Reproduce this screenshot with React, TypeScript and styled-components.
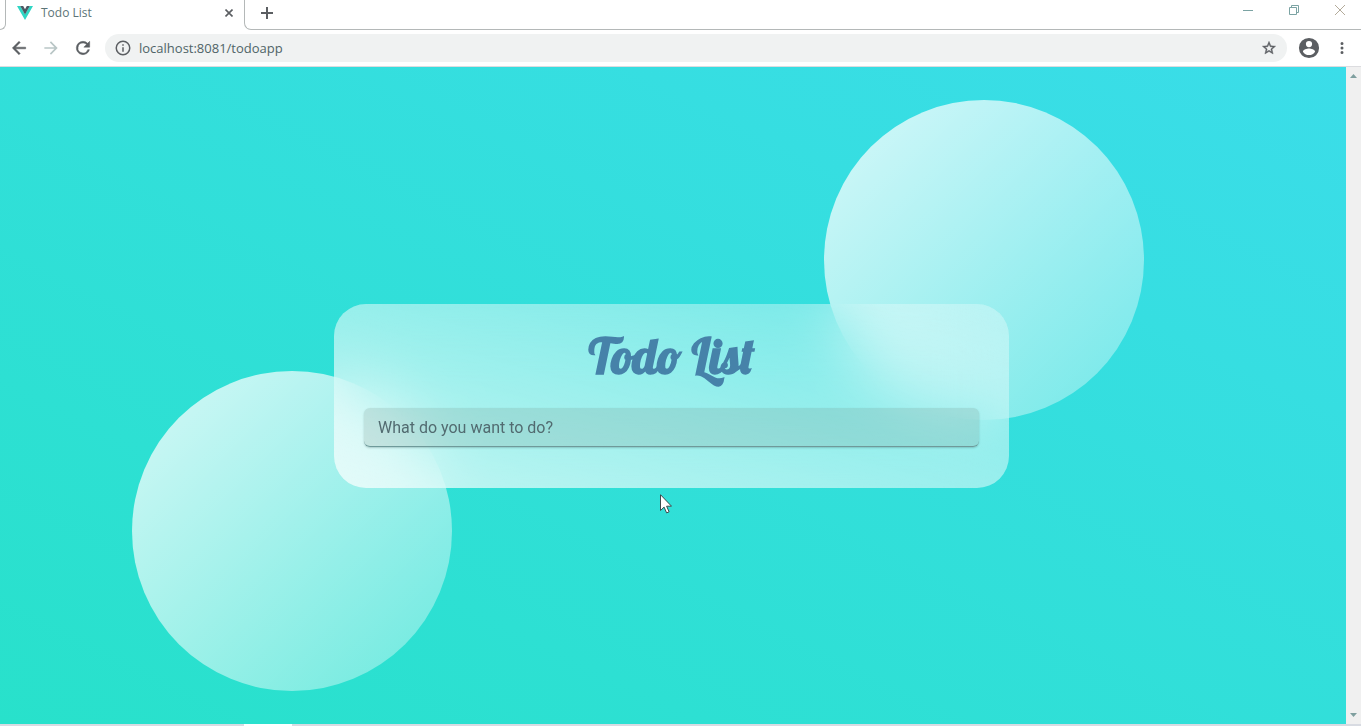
import React from "react";
import styled, { createGlobalStyle } from "styled-components";

const GlobalStyle = createGlobalStyle`
  *, *::before, *::after { box-sizing: border-box; }
  html, body, #root { height: 100%; }
  body { margin: 0; overflow: hidden; font-family: "Open Sans", sans-serif; }
  button { border: 0; padding: 0; background: none; font: inherit; color: inherit; }
`;

const Window = styled.div`
  display: flex;
  flex-direction: column;
  min-height: 100%;
  background: #fff;
`;

const TabStrip = styled.header`
  display: flex;
  height: 30px;
  flex: none;
`;

const StripEdge = styled.div`
  width: 6px;
  border: solid #b4b8b8;
  border-width: 0 1px 1px 0;
  border-bottom-right-radius: 7px;
`;

const Tab = styled.div`
  display: flex;
  align-items: center;
  width: 238px;
  padding: 0 9px 4px 11px;
  gap: 8px;
  font-size: 12px;
  color: #5c7477;
`;

const TabTitle = styled.span`
  flex: 1;
  line-height: 16px;
`;

const StripRest = styled.div`
  display: flex;
  flex: 1;
  justify-content: space-between;
  padding: 0 14px;
  border: solid #b4b8b8;
  border-width: 0 0 1px 1px;
  border-bottom-left-radius: 7px;
`;

const IconButton = styled.button<{ $w: number; $h: number; $color?: string }>`
  display: flex;
  flex: none;
  align-items: center;
  justify-content: center;
  width: ${(p) => p.$w}px;
  height: ${(p) => p.$h}px;
  color: ${(p) => p.$color ?? "#5b5e62"};
`;

const WindowControls = styled.div`
  display: flex;
  gap: 32px;
  height: 20px;
  align-items: center;
`;

const Toolbar = styled.nav`
  display: flex;
  flex: none;
  align-items: center;
  height: 37px;
  padding: 0 9px;
  border-bottom: 1px solid #dcdcdf;
`;

const NavButtons = styled.div`
  display: flex;
  gap: 12px;
  margin-right: 12px;
`;

const AddressBar = styled.div`
  display: flex;
  flex: 1;
  align-items: center;
  height: 28px;
  padding: 0 8px;
  border-radius: 14px;
  background: #f0f2f2;
`;

const Address = styled.input`
  flex: 1;
  min-width: 0;
  height: 20px;
  margin-left: 6px;
  padding: 0;
  border: 0;
  outline: 0;
  background: none;
  font-family: "Open Sans", sans-serif;
  font-size: 13px;
  color: #4f6467;
`;

const ToolbarEnd = styled.div`
  display: flex;
  gap: 12px;
  margin-left: 11px;
`;

const Viewport = styled.div`
  display: flex;
  flex: 1;
`;

const Page = styled.main`
  position: relative;
  display: flex;
  flex: 1;
  align-items: center;
  justify-content: center;
  padding-right: 3px;
  background: linear-gradient(to right top, #28e1cb, #3bdde9);
`;

const Circle = styled.div<{ $place: "top" | "bottom" }>`
  position: absolute;
  ${(p) => (p.$place === "top" ? "top: 5%; right: 15%;" : "bottom: 5%; left: 132px;")}
  width: 320px;
  height: 320px;
  border-radius: 50%;
  background: linear-gradient(to right bottom, rgba(255, 255, 255, 0.8), rgba(255, 255, 255, 0.3));
`;

const Card = styled.section`
  position: relative;
  width: 100%;
  max-width: 675px;
  padding: 20px 30px 41px;
  border-radius: 32px;
  background: linear-gradient(to right top, rgba(255, 255, 255, 0.7), rgba(255, 255, 255, 0.3));
  backdrop-filter: blur(32px);
`;

const Title = styled.h1`
  margin: 0 0 20px;
  text-align: center;
  font-family: Lobster, "Liberation Serif", cursive;
  font-size: 48px;
  font-weight: 700;
  line-height: 64px;
  color: #4682a9;
`;

const TaskInput = styled.input`
  display: block;
  width: 100%;
  height: 39px;
  padding: 2px 14px 0;
  border: 0;
  border-bottom: 1px solid #6f9a9a;
  border-radius: 6px;
  outline: 0;
  background: rgba(110, 140, 130, 0.2);
  box-shadow: 0 1px 2px rgba(50, 90, 90, 0.3);
  font-family: Roboto, sans-serif;
  font-size: 16px;
  color: #526b70;
  &::placeholder { color: #526b70; opacity: 1; }
`;

const ScrollRail = styled.div`
  display: flex;
  flex-direction: column;
  justify-content: space-between;
  width: 15px;
  padding: 1px 0;
  background: #f0f0f0;
`;

const Taskbar = styled.footer`
  flex: none;
  height: 2px;
  padding-left: 244px;
  background: #d8dbe2;
`;

const ActiveTask = styled.div`
  width: 48px;
  height: 2px;
  background: #fff;
`;

const Pointer = styled.svg`
  position: absolute;
  top: 65%;
  left: 49%;
`;

const paths = {
  back: "M20 11H7.83l5.59-5.59L12 4l-8 8 8 8 1.41-1.41L7.83 13H20v-2z",
  forward: "M12 4l-1.41 1.41L16.17 11H4v2h12.17l-5.58 5.59L12 20l8-8z",
  reload: "M17.65 6.35A7.95 7.95 0 0 0 12 4a8 8 0 1 0 7.73 10h-2.08A6 6 0 1 1 12 6c1.66 0 3.14.69 4.22 1.78L13 11h7V4l-2.35 2.35z",
  info: "M11 7h2v2h-2zm0 4h2v6h-2zm1-9a10 10 0 1 0 0 20 10 10 0 0 0 0-20zm0 18a8 8 0 1 1 0-16 8 8 0 0 1 0 16z",
  star: "M22 9.24l-7.19-.62L12 2 9.19 8.63 2 9.24l5.46 4.73L5.82 21 12 17.27 18.18 21l-1.63-7.03L22 9.24zM12 15.4l-3.76 2.27 1-4.28-3.32-2.88 4.38-.38L12 6.1l1.71 4.04 4.38.38-3.32 2.88 1 4.28L12 15.4z",
  person: "M12 1a11 11 0 1 0 0 22 11 11 0 0 0 0-22zm0 3.3a3.4 3.4 0 1 1 0 6.8 3.4 3.4 0 0 1 0-6.8zm0 15.4a7.6 7.6 0 0 1-6.600-3.700c0-2.200 4.400-3.400 6.600-3.400s6.600 1.200 6.600 3.400a7.600 7.600 0 0 1-6.600 3.700z",
  more: "M12 8a2 2 0 1 0 0-4 2 2 0 0 0 0 4zm0 2a2 2 0 1 0 0 4 2 2 0 0 0 0-4zm0 6a2 2 0 1 0 0 4 2 2 0 0 0 0-4z",
};

function Icon({ name, size = 20 }: { name: keyof typeof paths; size?: number }) {
  const bold = name === "star" || name === "back" || name === "reload";
  return (
    <svg
      width={size}
      height={size}
      viewBox="0 0 24 24"
      fill="currentColor"
      stroke={bold ? "currentColor" : "none"}
      strokeWidth="0.6"
      aria-hidden="true"
    >
      <path d={paths[name]} />
    </svg>
  );
}

export default function App() {
  return (
    <Window>
      <GlobalStyle />
      <TabStrip>
        <StripEdge />
        <Tab>
          <svg width="16" height="14" viewBox="0 0 16 14" aria-hidden="true">
            <path d="M0 0h3.200L8 8.300 12.800 0H16L8 14z" fill="#2fd6c4" />
            <path d="M3.200 0h3L8 3.200 9.800 0h3L8 8.500z" fill="#4b5964" />
          </svg>
          <TabTitle>Todo List</TabTitle>
          <IconButton $w={12} $h={16} aria-label="Close tab">
            <svg width="8" height="8" viewBox="0 0 8 8" stroke="currentColor" strokeWidth="1.6">
              <path d="M.5.5l7 7M7.500.5l-7 7" />
            </svg>
          </IconButton>
        </Tab>
        <StripRest>
          <IconButton $w={16} $h={26} aria-label="New tab">
            <svg width="12" height="12" viewBox="0 0 12 12" stroke="currentColor" strokeWidth="2">
              <path d="M6 0v12M0 6h12" />
            </svg>
          </IconButton>
          <WindowControls>
            <IconButton $w={14} $h={20} $color="#7ba3a3" aria-label="Minimize">
              <svg width="10" height="10" viewBox="0 0 10 10" stroke="currentColor"><path d="M0 5.500h10" /></svg>
            </IconButton>
            <IconButton $w={14} $h={20} $color="#7ba3a3" aria-label="Restore">
              <svg width="10" height="10" viewBox="0 0 10 10" stroke="currentColor" fill="none">
                <path d="M.5 2.500h7v7h-7zM2.500 2.500v-2h7v7h-2" />
              </svg>
            </IconButton>
            <IconButton $w={14} $h={20} $color="#b3ab9a" aria-label="Close">
              <svg width="10" height="10" viewBox="0 0 10 10" stroke="currentColor"><path d="M0 0l10 10M10 0L0 10" /></svg>
            </IconButton>
          </WindowControls>
        </StripRest>
      </TabStrip>
      <Toolbar>
        <NavButtons>
          <IconButton $w={20} $h={20} aria-label="Back"><Icon name="back" /></IconButton>
          <IconButton $w={20} $h={20} $color="#b9c6c6" aria-label="Forward"><Icon name="forward" /></IconButton>
          <IconButton $w={20} $h={20} aria-label="Reload"><Icon name="reload" /></IconButton>
        </NavButtons>
        <AddressBar>
          <IconButton $w={20} $h={20} aria-label="Site information"><Icon name="info" size={18} /></IconButton>
          <Address aria-label="Address" defaultValue="localhost:8081/todoapp" />
          <IconButton $w={20} $h={20} aria-label="Bookmark this page"><Icon name="star" size={16} /></IconButton>
        </AddressBar>
        <ToolbarEnd>
          <IconButton $w={22} $h={24} aria-label="Profile"><Icon name="person" size={24} /></IconButton>
          <IconButton $w={20} $h={24} aria-label="Menu"><Icon name="more" size={18} /></IconButton>
        </ToolbarEnd>
      </Toolbar>
      <Viewport>
        <Page>
          <Circle $place="top" />
          <Circle $place="bottom" />
          <Card>
            <Title>Todo List</Title>
            <TaskInput aria-label="New task" placeholder="What do you want to do?" />
          </Card>
          <Pointer width="12" height="20" viewBox="0 0 12 20" aria-hidden="true">
            <path d="M.5.7v15.800l3.600-3.400 2.500 5.800 2.500-1.100-2.500-5.600h4.900z" fill="#fff" stroke="#3c4a4c" />
          </Pointer>
        </Page>
        <ScrollRail>
          <IconButton $w={15} $h={16} $color="#7f9f9f" aria-label="Scroll up">
            <svg width="7" height="4" viewBox="0 0 7 4" fill="currentColor"><path d="M0 4l3.500-4L7 4z" /></svg>
          </IconButton>
          <IconButton $w={15} $h={16} $color="#7f9f9f" aria-label="Scroll down">
            <svg width="7" height="4" viewBox="0 0 7 4" fill="currentColor"><path d="M0 0l3.500 4L7 0z" /></svg>
          </IconButton>
        </ScrollRail>
      </Viewport>
      <Taskbar><ActiveTask /></Taskbar>
    </Window>
  );
}
